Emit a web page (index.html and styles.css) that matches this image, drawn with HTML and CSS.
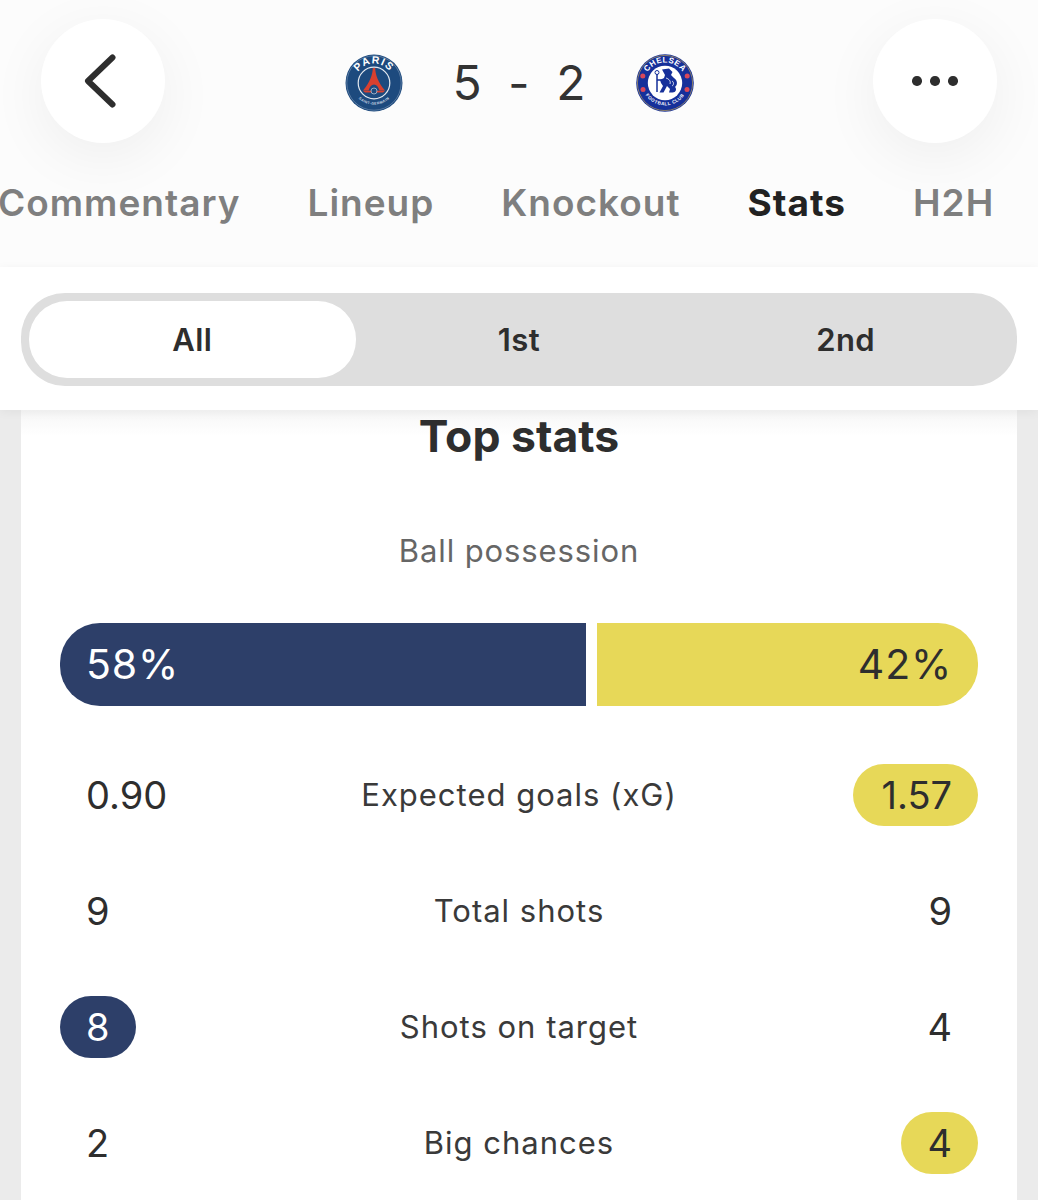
FILE: index.html
```html
<!DOCTYPE html>
<html lang="en">
<head>
<meta charset="utf-8">
<title>PSG 5 - 2 Chelsea stats</title>
<link rel="stylesheet" href="styles.css">
</head>
<body>
<div class="page">
  <header class="header">
    <div class="topbar">
      <button class="round-btn" aria-label="Back">
        <svg class="icon-back" viewBox="0 0 32 54" width="32" height="54"><path d="M28.5 3.5 L4 27 L28.5 50.5" fill="none" stroke="#2e2e2e" stroke-width="6" stroke-linecap="round" stroke-linejoin="round"/></svg>
      </button>
      <div class="score">
        <svg class="crest crest-psg" viewBox="0 0 58 58" width="58" height="58">
          <defs><path id="psgArc" d="M9.5 29 A19.5 19.5 0 0 1 48.5 29"/><path id="psgLow" d="M7 33 A22.5 22.5 0 0 0 51 33"/></defs>
          <circle cx="29" cy="29" r="28.5" fill="#1d4a7e"/>
          <circle cx="29" cy="29" r="27.2" fill="none" stroke="#7d97b5" stroke-width=".6"/>
          <circle cx="29" cy="29" r="15.8" fill="#1d4a7e" stroke="#e4e9ef" stroke-width="1.2"/>
          <path d="M27.8 14 h2.4 C30.4 21 33 28 40 36.5 H34.5 C33.2 32.5 31.5 30.5 29 30.5 C26.5 30.5 24.8 32.5 23.5 36.5 H18 C25 28 27.6 21 27.8 14 Z" fill="#d8402f"/>
          <path d="M18 36.7 H40 L38 38.5 H20 Z" fill="#d8402f"/>
          <circle cx="29" cy="37" r="3" fill="#1d4a7e" stroke="#e4e9ef" stroke-width=".6"/>
          <text class="crest-t crest-paris"><textPath href="#psgArc" startOffset="50%" text-anchor="middle">PARIS</textPath></text>
          <text class="crest-t crest-tiny"><textPath href="#psgLow" startOffset="50%" text-anchor="middle">SAINT-GERMAIN</textPath></text>
        </svg>
        <div class="goals"><span>5</span><span class="dash">-</span><span>2</span></div>
        <svg class="crest crest-che" viewBox="0 0 58 58" width="58" height="58">
          <defs><path id="cheTop" d="M8.4 29 A20.6 20.6 0 0 1 49.6 29"/><path id="cheLow" d="M5.8 31 A23.4 23.4 0 0 0 52.2 31"/></defs>
          <circle cx="29" cy="29" r="28.8" fill="#16309a"/>
          <circle cx="29" cy="29" r="27.6" fill="none" stroke="#d9b44a" stroke-width=".6"/>
          <circle cx="29" cy="29" r="17.2" fill="#fff"/>
          <circle cx="6.8" cy="22" r="2.5" fill="#d8485a"/>
          <circle cx="51.2" cy="22" r="2.5" fill="#d8485a"/>
          <circle cx="7" cy="35.5" r="2.5" fill="#d8485a"/>
          <circle cx="51" cy="35.5" r="2.5" fill="#d8485a"/>
          <circle cx="21" cy="18.5" r="2" fill="none" stroke="#16309a" stroke-width="1"/>
          <path d="M21 20 V38 M21 26 H26" stroke="#16309a" stroke-width="1.5" fill="none"/>
          <path d="M26 15.5 L33 14.5 L36.5 18 L35 21 L38 24 C41.5 26 42 31 39 33 C41 35 40 38.5 36.5 38.5 H33 L34 35 L31 32 L27.5 38.5 H23.5 L27 32 L25 29 L24 26 L28 24 L29 21 Z" fill="#16309a"/>
          <path d="M30 24 C33 25 35 27 34 30 M36 27 C38 28 38 31 36 32" stroke="#fff" stroke-width=".8" fill="none"/>
          <text class="crest-t crest-chelsea"><textPath href="#cheTop" startOffset="50%" text-anchor="middle">CHELSEA</textPath></text>
          <text class="crest-t crest-fc"><textPath href="#cheLow" startOffset="50%" text-anchor="middle">FOOTBALL CLUB</textPath></text>
        </svg>
      </div>
      <button class="round-btn" aria-label="More">
        <span class="dots"><i></i><i></i><i></i></span>
      </button>
    </div>
    <nav class="tabs">
      <span class="tab">Commentary</span>
      <span class="tab">Lineup</span>
      <span class="tab">Knockout</span>
      <span class="tab tab-on">Stats</span>
      <span class="tab">H2H</span>
    </nav>
  </header>

  <section class="filter">
    <div class="segment">
      <span class="seg seg-on">All</span>
      <span class="seg">1st</span>
      <span class="seg">2nd</span>
    </div>
  </section>

  <main class="gutter">
    <div class="card">
      <h2 class="card-title">Top stats</h2>
      <p class="poss-label">Ball possession</p>
      <div class="poss">
        <div class="poss-home">58%</div>
        <div class="poss-away">42%</div>
      </div>
      <div class="rows">
        <div class="row">
          <span class="val">0.90</span>
          <span class="label">Expected goals (xG)</span>
          <span class="val val-r val-wide pill pill-away">1.57</span>
        </div>
        <div class="row">
          <span class="val">9</span>
          <span class="label">Total shots</span>
          <span class="val val-r">9</span>
        </div>
        <div class="row">
          <span class="val pill pill-home">8</span>
          <span class="label">Shots on target</span>
          <span class="val val-r">4</span>
        </div>
        <div class="row">
          <span class="val">2</span>
          <span class="label">Big chances</span>
          <span class="val val-r pill pill-away">4</span>
        </div>
      </div>
    </div>
  </main>
</div>
</body>
</html>
```

FILE: styles.css
```css
* { box-sizing: border-box; }
html, body { margin: 0; padding: 0; background: #ebebeb; }
body { font-family: Inter, "Liberation Sans", sans-serif; color: #2e2e2e; }
.page { width: 1038px; height: 1200px; overflow: hidden; display: flex; flex-direction: column; }

.header { flex: none; height: 267px; background: #fcfcfc; padding-top: 19px; overflow: hidden; }
.topbar { display: flex; align-items: center; justify-content: space-between; padding: 0 41px; height: 124px; }
.round-btn { width: 124px; height: 124px; border: 0; padding: 0; border-radius: 50%; background: #fff; box-shadow: 0 14px 60px rgba(0,0,0,.06); display: flex; align-items: center; justify-content: center; }
.icon-back { margin-left: -6px; }
.dots { display: flex; gap: 8.5px; }
.dots i { display: block; width: 9.5px; height: 9.5px; border-radius: 50%; background: #2e2e2e; }
.score { display: flex; align-items: center; margin-top: 3px; }
.crest { display: block; flex: none; }
.goals { display: flex; align-items: center; justify-content: space-between; width: 133px; margin: 0 50px; font-size: 48px; line-height: 58px; font-weight: 400; color: #333; }
.dash { font-size: 46px; }
.crest-t { fill: #fff; font-family: "Liberation Sans", sans-serif; font-weight: 700; }
.crest-paris { font-size: 10.5px; letter-spacing: 1.2px; }
.crest-tiny { font-size: 3.6px; letter-spacing: .4px; fill: #c9d5e2; }
.crest-chelsea { font-size: 8px; letter-spacing: .5px; }
.crest-fc { font-size: 4.6px; letter-spacing: .5px; }

.tabs { display: flex; gap: 67px; margin-top: 38px; margin-left: -2px; white-space: nowrap; }
.tab { font-size: 37px; line-height: 44px; font-weight: 600; letter-spacing: 1px; color: #7f7f7f; }
.tab-on { color: #222; font-weight: 700; }

.filter { flex: none; height: 143px; padding: 26px 21px 0; background: #fff; position: relative; z-index: 1; box-shadow: 0 2px 10px rgba(0,0,0,.05); }
.segment { height: 93px; background: #dedede; border-radius: 44px; padding: 8px; display: grid; grid-template-columns: repeat(3, 1fr); }
.seg { display: flex; align-items: center; justify-content: center; font-size: 31px; font-weight: 600; letter-spacing: .4px; color: #2e2e2e; border-radius: 38px; }
.seg-on { background: #fff; }

.gutter { flex: 1; min-height: 0; padding: 0 21px; background: #ebebeb; }
.card { height: 100%; background: linear-gradient(#f6f6f6, #fff 26px); padding: 0 39px; }
.card-title { margin: 0; padding-top: 1px; text-align: center; font-size: 44.5px; line-height: 50px; font-weight: 700; color: #2e2e2e; }
.poss-label { margin: 0; padding-top: 70px; text-align: center; font-size: 31px; line-height: 40px; letter-spacing: .9px; color: #666; }
.poss { display: grid; grid-template-columns: 526fr 381fr; gap: 11px; margin-top: 52px; height: 83px; font-size: 41px; line-height: 83px; letter-spacing: .8px; }
.poss-home { background: #2d3f69; color: #fff; border-radius: 40px 0 0 40px; padding-left: 26px; }
.poss-away { background: #e7d858; color: #2e2e2e; border-radius: 0 40px 40px 0; padding-right: 26px; text-align: right; }

.rows { display: flex; flex-direction: column; margin-top: 31px; }
.row { height: 116px; display: grid; grid-template-columns: 1fr auto 1fr; align-items: center; }
.val { justify-self: start; font-size: 38px; line-height: 62px; padding: 0 26px; color: #2e2e2e; }
.val-r { justify-self: end; }
.val-wide { padding-left: 29px; }
.label { font-size: 31px; line-height: 40px; letter-spacing: 1px; color: #3a3a3a; text-align: center; }
.pill { height: 62px; border-radius: 31px; }
.pill-home { background: #2d3f69; color: #fff; }
.pill-away { background: #e7d858; }
```
